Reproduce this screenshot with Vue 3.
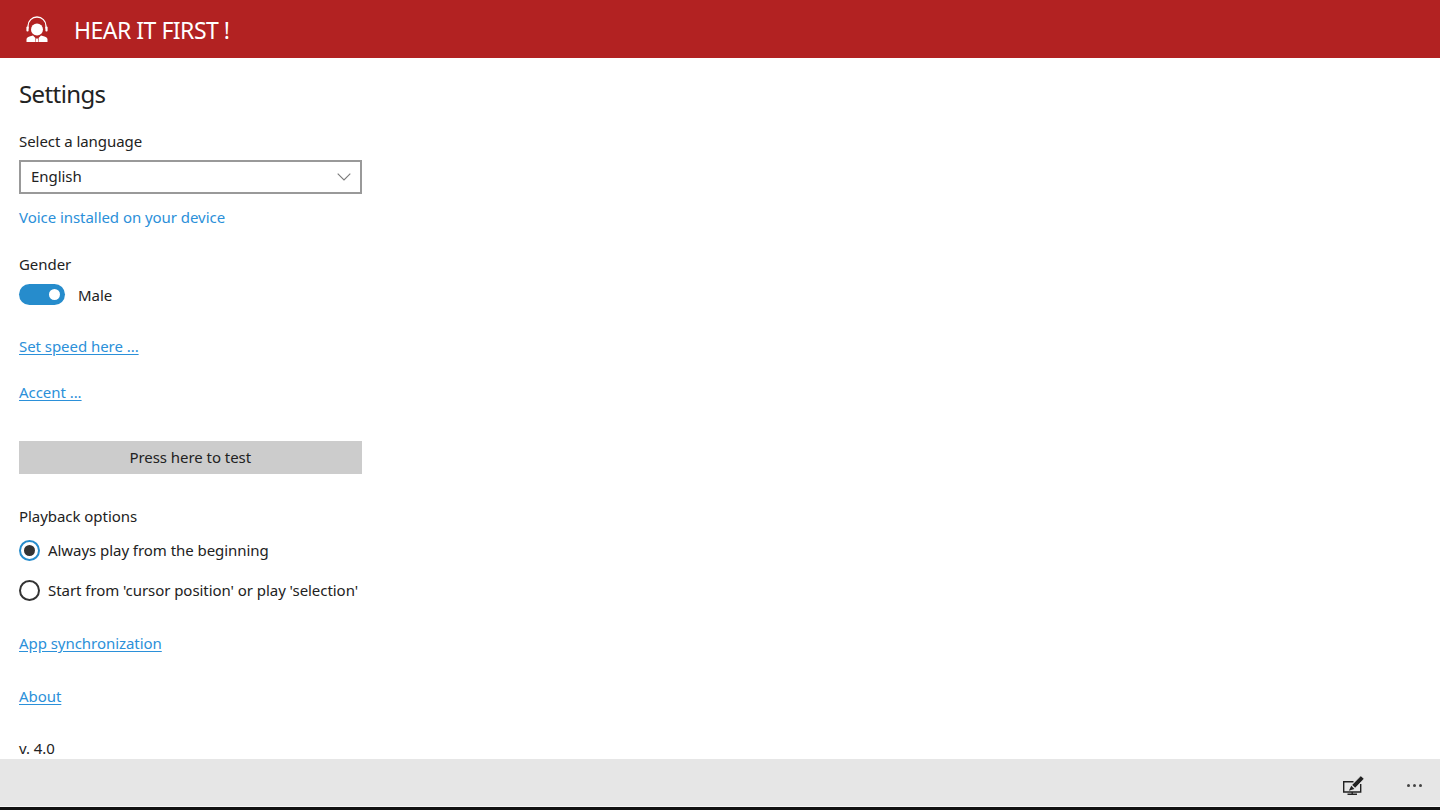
<script setup>
import { ref } from "vue";

const gender = ref(true);
const playback = ref("start");
</script>

<template>
  <div class="app">
    <header class="top-bar">
      <svg class="logo" viewBox="0 0 24 26" width="24" height="26">
        <path d="M3 12.500V10a9 9 0 0 1 18 0V12.500" fill="none" stroke="#fff" stroke-width="1.300" />
        <rect x="1.400" y="10.500" width="2.200" height="5" rx="1" fill="#fff" />
        <rect x="20.400" y="10.500" width="2.200" height="5" rx="1" fill="#fff" />
        <circle cx="12" cy="13.500" r="6" fill="#fff" />
        <path d="M1.500 26v-2.800c0-1.800 2.400-2.800 6.500-3.700l2.400 2.500v4zM22.500 26v-2.800c0-1.800-2.400-2.800-6.500-3.700l-2.400 2.500v4z" fill="#fff" />
        <path d="M11.100 22.500h1.800l.4 3.500h-2.600z" fill="#fff" />
      </svg>
      <span class="app-title">HEAR IT FIRST !</span>
    </header>

    <main class="content">
      <h1 class="page-title">Settings</h1>

      <div class="label language-label">Select a language</div>
      <div class="select">
        <span>English</span>
        <svg viewBox="0 0 14 8" width="14" height="8">
          <path d="M.7.7 7 7 13.300.7" fill="none" stroke="#7a7a7a" stroke-width="1.100" />
        </svg>
      </div>
      <div class="voice-note">Voice installed on your device</div>

      <div class="label gender-label">Gender</div>
      <div class="toggle-row" @click="gender = !gender">
        <span class="toggle"><span class="knob"></span></span>
        <span class="text">Male</span>
      </div>

      <a class="link speed-link">Set speed here ...</a>
      <a class="link accent-link">Accent ...</a>

      <button class="test-button">Press here to test</button>

      <div class="label playback-label">Playback options</div>
      <div class="radio-row first" @click="playback = 'start'">
        <span class="radio" :class="{ on: playback === 'start' }"></span>
        <span class="text">Always play from the beginning</span>
      </div>
      <div class="radio-row second" @click="playback = 'cursor'">
        <span class="radio" :class="{ on: playback === 'cursor' }"></span>
        <span class="text">Start from 'cursor position' or play 'selection'</span>
      </div>

      <a class="link sync-link">App synchronization</a>
      <a class="link about-link">About</a>
      <div class="label version">v. 4.0</div>
    </main>

    <footer class="command-bar">
      <svg class="pen-icon" viewBox="0 0 22 19" width="22" height="19">
        <path d="M11.500 5.700H1.700V16H18.700V8" fill="none" stroke="#222" stroke-width="1.400" />
        <path d="M10.200 16v2M5.500 18.300h9.500" fill="none" stroke="#222" stroke-width="1.400" />
        <path d="M18.800 -.2 22 2.800 13.200 12 9.900 8.900z" fill="#222" stroke="#e6e6e6" stroke-width=".6" />
        <path d="M9.300 9.800 12.400 12.900 6.800 14.800z" fill="#222" />
      </svg>
      <span class="more">
        <i></i><i></i><i></i>
      </span>
    </footer>
  </div>
</template>

<style>
html, body {
  margin: 0;
  background: #fff;
}
</style>

<style scoped>
.app {
  width: 1440px;
  height: 810px;
  display: flex;
  flex-direction: column;
  overflow: hidden;
  background: #fff;
  font-family: "Noto Sans", "Open Sans", sans-serif;
  font-size: 15px;
  letter-spacing: -0.05px;
  color: #222;
}

.top-bar {
  flex: 0 0 58px;
  height: 58px;
  box-sizing: border-box;
  display: flex;
  align-items: center;
  padding-left: 25px;
  background: #b22222;
  color: #fff;
}

.logo {
  flex: none;
}

.app-title {
  margin: 2px 0 0 25px;
  font-size: 23px;
  letter-spacing: -0.5px;
}

.content {
  flex: 1;
  min-height: 0;
  overflow: hidden;
  display: flex;
  flex-direction: column;
  align-items: flex-start;
  padding-left: 19px;
}

.page-title {
  margin: 18px 0 0;
  height: 36px;
  line-height: 36px;
  font-size: 24px;
  font-weight: 400;
  letter-spacing: -0.6px;
}

.label,
.text,
.link,
.voice-note {
  line-height: 22px;
}

.language-label {
  margin-top: 18px;
}

.select {
  width: 342.500px;
  height: 34px;
  margin-top: 8px;
  box-sizing: border-box;
  border: 2px solid #999;
  display: flex;
  align-items: center;
  justify-content: space-between;
  padding: 0 3px 2px 10px;
}

.select svg {
  margin: 2px 6px 0 0;
}

.voice-note {
  margin-top: 12px;
  color: #2b90d9;
}

.gender-label {
  margin-top: 25px;
}

.toggle-row {
  margin-top: 9px;
  display: flex;
  align-items: center;
  gap: 13px;
}

.toggle {
  width: 46px;
  height: 21px;
  border-radius: 11px;
  background: #268ccc;
  display: flex;
  align-items: center;
  justify-content: flex-end;
  padding-right: 5px;
  box-sizing: border-box;
}

.knob {
  width: 11px;
  height: 11px;
  border-radius: 50%;
  background: #fff;
}

.link {
  color: #2b90d9;
  text-decoration: underline;
  text-underline-offset: 2px;
}

.speed-link {
  margin-top: 29px;
}

.accent-link {
  margin-top: 24px;
}

.test-button {
  width: 342.500px;
  height: 34px;
  margin-top: 38px;
  border: 0;
  padding: 0;
  background: #ccc;
  color: #222;
  font: inherit;
  letter-spacing: inherit;
}

.playback-label {
  margin-top: 31px;
}

.radio-row {
  display: flex;
  align-items: center;
  gap: 8px;
}

.radio-row.first {
  margin-top: 12px;
}

.radio-row.second {
  margin-top: 18px;
}

.radio {
  width: 21px;
  height: 21px;
  box-sizing: border-box;
  border: 2px solid #333;
  border-radius: 50%;
  display: flex;
  align-items: center;
  justify-content: center;
}

.radio.on {
  border-color: #268ccc;
}

.radio.on::after {
  content: "";
  width: 11px;
  height: 11px;
  border-radius: 50%;
  background: #333;
}

.sync-link {
  margin-top: 31px;
}

.about-link {
  margin-top: 31px;
}

.version {
  margin-top: 30px;
}

.command-bar {
  flex: 0 0 51px;
  height: 51px;
  box-sizing: border-box;
  display: flex;
  align-items: center;
  justify-content: flex-end;
  padding: 5px 18px 0 0;
  background: #e6e6e6;
  border-bottom: 3px solid #111;
  box-shadow: inset 0 -1px 0 #f6f6f6;
}

.pen-icon {
  margin-right: 43px;
}

.more {
  display: flex;
  gap: 3px;
}

.more i {
  width: 3px;
  height: 3px;
  border-radius: 50%;
  background: #444;
}
</style>
